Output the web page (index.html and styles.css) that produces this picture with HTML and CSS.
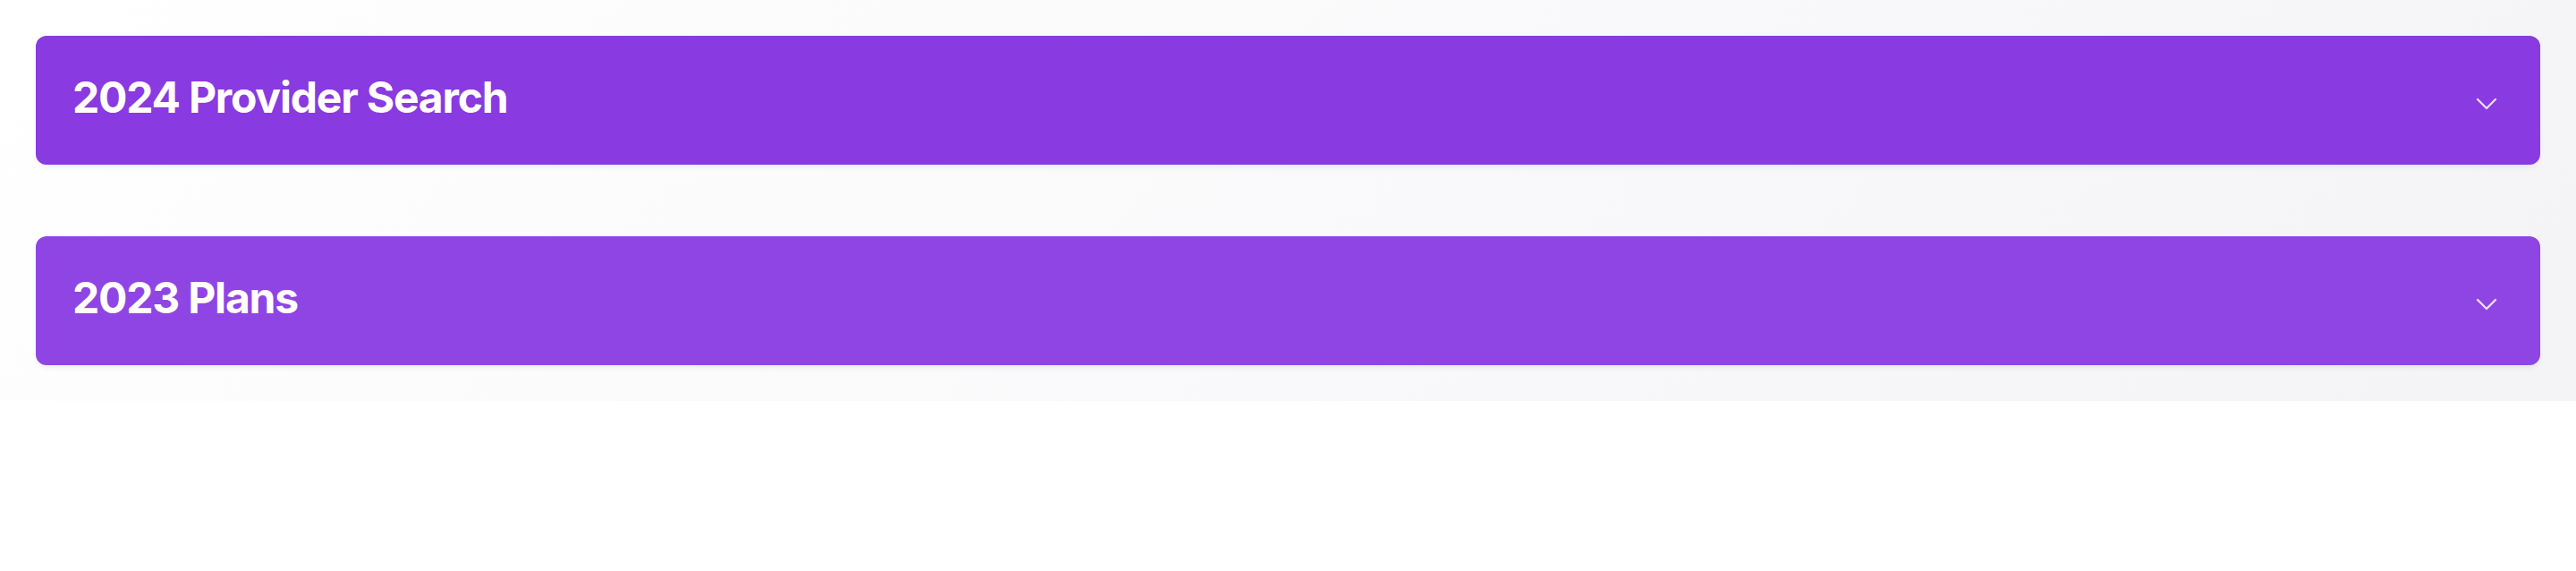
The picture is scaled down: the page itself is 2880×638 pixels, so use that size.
FILE: index.html
```html
<!DOCTYPE html>
<html lang="en">
<head>
<meta charset="utf-8">
<title>Plans</title>
<link rel="stylesheet" href="styles.css">
</head>
<body>
<section class="accordion">
  <div class="item item-2024">
    <button class="item-header" type="button">
      <span class="item-title">2024 Provider Search</span>
      <svg class="chevron" viewBox="0 0 24 24" fill="none" stroke="currentColor" stroke-width="1.8" stroke-linecap="round" stroke-linejoin="round" aria-hidden="true"><path d="M19.5 8.25l-7.5 7.5-7.5-7.5"/></svg>
    </button>
  </div>
  <div class="item item-2023">
    <button class="item-header" type="button">
      <span class="item-title">2023 Plans</span>
      <svg class="chevron" viewBox="0 0 24 24" fill="none" stroke="currentColor" stroke-width="1.8" stroke-linecap="round" stroke-linejoin="round" aria-hidden="true"><path d="M19.5 8.25l-7.5 7.5-7.5-7.5"/></svg>
    </button>
  </div>
</section>
</body>
</html>
```

FILE: styles.css
```css
html, body {
  margin: 0;
  padding: 0;
  background: #ffffff;
  font-family: Inter, "Noto Sans", "Liberation Sans", sans-serif;
}

.accordion {
  display: flex;
  flex-direction: column;
  gap: 80px;
  padding: 40px;
  background: linear-gradient(135deg, #ffffff 0%, #f4f4f7 100%);
}

.item {
  border-radius: 12px;
  box-shadow: 0 4px 6px -1px rgba(0, 0, 0, 0.06), 0 2px 4px -2px rgba(0, 0, 0, 0.04);
}

.item-2024 { background: #893ae0; }
.item-2023 { background: #8f45e3; }

.item-header {
  display: flex;
  align-items: center;
  justify-content: space-between;
  width: 100%;
  height: 144px;
  padding: 0 44px 0 41px;
  border: 0;
  background: transparent;
  color: #ffffff;
  font: inherit;
  cursor: pointer;
  box-sizing: border-box;
  text-align: left;
}

.item-title {
  font-size: 48px;
  font-weight: 700;
  letter-spacing: -0.025em;
  line-height: 1;
  margin-bottom: 7px;
}

.chevron {
  width: 32px;
  height: 32px;
  margin-top: 8px;
  color: rgba(255, 255, 255, 0.82);
  flex-shrink: 0;
}
```
